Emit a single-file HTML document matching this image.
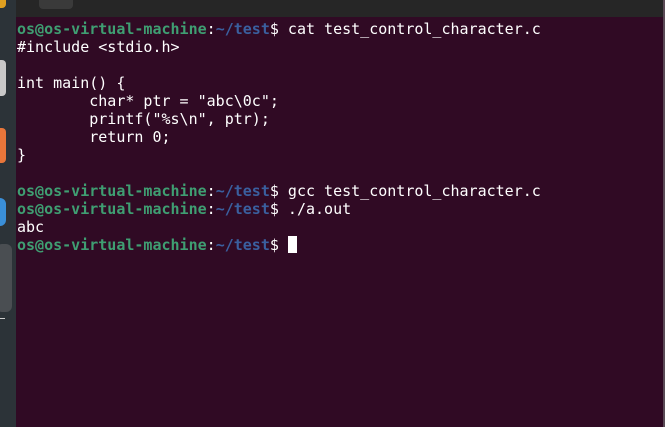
<!DOCTYPE html>
<html><head><style>
html,body{margin:0;padding:0;width:665px;height:427px;overflow:hidden;background:#300a24}
#dock{position:absolute;left:0;top:0;width:16px;height:427px;background:#2c3338}
#hdr{position:absolute;left:16px;top:0;width:649px;height:17px;background:#262626}
#tab{position:absolute;left:23px;top:0;width:34px;height:9px;background:#3a3a3a;border-radius:0 0 4px 4px}
#term{position:absolute;left:16px;top:17px;width:647px;height:409px;background:#300a24}
#edge{position:absolute;right:0;top:0;width:2px;height:427px;background:#5a4a55}
pre{margin:0;position:absolute;left:17px;top:20px;font-family:"DejaVu Sans Mono","Liberation Mono",monospace;font-size:15px;line-height:18px;color:#ffffff}
.g{color:#3f9e72;font-weight:bold}.b{color:#3a5f9e;font-weight:bold}
.cur{display:inline-block;width:9px;height:17px;background:#fff;vertical-align:-3px}
.ic{position:absolute;left:-6px;width:12px;border-radius:4px}
</style></head><body>
<div id="dock">
<div class="ic" style="top:-4px;height:12px;background:#e0a020"></div>
<div class="ic" style="top:60px;height:36px;background:#c8c8c8;border-left:0"></div>
<div class="ic" style="top:128px;height:35px;background:#e8763a"></div>
<div class="ic" style="top:198px;height:28px;background:#3a8fd8;border-radius:8px"></div>
<div style="position:absolute;left:-4px;top:244px;width:16px;height:68px;background:#4a4e52;border-radius:6px"></div>
<div style="position:absolute;left:0;top:318px;width:5px;height:1px;background:#ccc"></div>
</div>
<div id="hdr"><div id="tab"></div></div>
<div id="term"></div>
<div id="edge"></div>
<pre><span class="g">os@os-virtual-machine</span>:<span class="b">~/test</span>$ cat test_control_character.c
#include &lt;stdio.h&gt;

int main() {
        char* ptr = "abc\0c";
        printf("%s\n", ptr);
        return 0;
}

<span class="g">os@os-virtual-machine</span>:<span class="b">~/test</span>$ gcc test_control_character.c
<span class="g">os@os-virtual-machine</span>:<span class="b">~/test</span>$ ./a.out
abc
<span class="g">os@os-virtual-machine</span>:<span class="b">~/test</span>$ <span class="cur"></span></pre>
</body></html>
